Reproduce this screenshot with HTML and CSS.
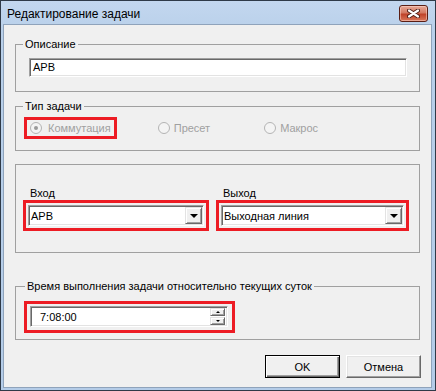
FILE: index.html
```html
<!DOCTYPE html>
<html lang="ru">
<head>
    <meta charset="UTF-8">
    <title>Редактирование задачи</title>
    <link rel="stylesheet" href="styles.css">
</head>
<body>
    <div class="window">
        <div class="titlebar">
            <span class="title">Редактирование задачи</span>
            <span class="close">
                <svg width="13" height="9" viewBox="0 0 13 9">
                    <path d="M2 1.5 L11 7.5 M11 1.5 L2 7.5" stroke="#4a1a12" stroke-width="4" stroke-linecap="round"/>
                    <path d="M2 1.5 L11 7.5 M11 1.5 L2 7.5" stroke="#fff" stroke-width="2.2" stroke-linecap="round"/>
                </svg>
            </span>
        </div>

        <div class="client">
            <!-- Описание -->
            <fieldset class="group">
                <legend>Описание</legend>
                <div class="body desc">
                    <div class="field">АРВ</div>
                </div>
            </fieldset>

            <!-- Тип задачи -->
            <fieldset class="group">
                <legend>Тип задачи</legend>
                <div class="body kind">
                    <div class="mark radio-mark">
                        <span class="radio checked"><i></i>Коммутация</span>
                    </div>
                    <span class="radio preset"><i></i>Пресет</span>
                    <span class="radio macro"><i></i>Макрос</span>
                </div>
            </fieldset>

            <!-- Вход / Выход -->
            <fieldset class="group">
                <div class="body io">
                    <div class="col">
                        <div class="label">Вход</div>
                        <div class="mark">
                            <div class="combo"><span>АРВ</span><b class="arrow"></b></div>
                        </div>
                    </div>
                    <div class="col">
                        <div class="label">Выход</div>
                        <div class="mark">
                            <div class="combo"><span>Выходная линия</span><b class="arrow"></b></div>
                        </div>
                    </div>
                </div>
            </fieldset>

            <!-- Время -->
            <fieldset class="group time-group">
                <legend>Время выполнения задачи относительно текущих суток</legend>
                <div class="body time">
                    <div class="mark time-mark">
                        <div class="spin">
                            <span>7:08:00</span>
                            <div class="spin-btns">
                                <b class="up"></b>
                                <b class="down"></b>
                            </div>
                        </div>
                    </div>
                </div>
            </fieldset>

            <div class="buttons">
                <button class="btn default">OK</button>
                <button class="btn">Отмена</button>
            </div>
        </div>
    </div>
</body>
</html>
```

FILE: styles.css
```css
* {
    box-sizing: border-box;
}
body {
    margin: 0;
    font-family: "Liberation Sans", Arial, sans-serif;
    font-size: 11px;
    color: #000;
    background: #fff;
}
.window {
    width: 436px;
    height: 391px;
    border: 1px solid #2f3a48;
    background: linear-gradient(#c3d7ef, #b9d0ea 30px, #b4cce8);
    padding: 0 3px 2px 2px;
    display: flex;
    flex-direction: column;
}
.titlebar {
    height: 23px;
    display: flex;
    align-items: flex-start;
    justify-content: space-between;
}
.title {
    font-size: 12px;
    line-height: 14px;
    padding: 6px 0 0 4px;
    color: #000;
}
.close {
    width: 29px;
    height: 17px;
    margin: 4px 4px 0 0;
    border: 1px solid #5a1e14;
    border-radius: 3px;
    background: linear-gradient(#e8a896, #d47a63 45%, #c0432a 55%, #d9775a);
    box-shadow: inset 0 0 0 1px rgba(255, 220, 210, 0.5);
    display: flex;
    align-items: center;
    justify-content: center;
}
.client {
    flex: 1;
    background: #f0f0f0;
    border: 1px solid #8fa3bb;
    padding: 13px 11px 0 11px;
}
.group {
    margin: 0;
    padding: 0;
    min-width: 0;
    border: 1px solid #a0a0a0;
}
.group + .group {
    margin-top: 8px;
}
.group legend {
    padding: 0 2px;
    margin-left: 7px;
    line-height: 13px;
}
.desc {
    padding: 7px 12px 14px 13px;
}
.field, .combo, .spin {
    background: #fff;
    border: 1px solid;
    border-color: #a0a0a0 #fff #fff #a0a0a0;
    box-shadow: inset 1px 1px 0 #696969, inset -1px -1px 0 #e3e3e3;
}
.field {
    height: 19px;
    line-height: 17px;
    padding-left: 3px;
}
.mark {
    border: 3px solid #ed1c24;
    padding: 2px;
}

/* Тип задачи */
.kind {
    display: flex;
    align-items: center;
    padding: 4px 0 11px 8px;
}
.radio-mark {
    height: 22px;
    padding: 0 3px;
    display: flex;
    align-items: center;
}
.radio {
    display: flex;
    align-items: center;
    gap: 6px;
    color: #a0a0a0;
    line-height: 13px;
}
.radio i {
    width: 12px;
    height: 12px;
    border: 1px solid #b4b4b4;
    border-radius: 50%;
    background: #f4f4f4;
    position: relative;
}
.radio.checked i::after {
    content: "";
    position: absolute;
    left: 3px;
    top: 3px;
    width: 4px;
    height: 4px;
    border-radius: 50%;
    background: #9a9a9a;
}
.preset {
    margin-left: 41px;
    gap: 4px;
}
.macro {
    margin-left: 54px;
    gap: 4px;
}

/* Вход / Выход */
.group + .group.time-group {
    margin-top: 27px;
}
.group:nth-child(3) {
    margin-top: 13px;
}
.io {
    display: grid;
    grid-template-columns: 186px 193px;
    column-gap: 7px;
    padding: 22px 9px 21px 7px;
}
.label {
    line-height: 13px;
    padding-left: 7px;
}
.combo {
    height: 21px;
    display: flex;
    align-items: center;
    justify-content: space-between;
    padding: 0 1px 0 2px;
}
.arrow, .spin-btns b {
    background: #f0f0f0;
    border: 1px solid;
    border-color: #e3e3e3 #696969 #696969 #e3e3e3;
    box-shadow: inset 1px 1px 0 #fff, inset -1px -1px 0 #a0a0a0;
    display: flex;
    align-items: center;
    justify-content: center;
}
.arrow {
    width: 17px;
    height: 17px;
}
.arrow::after {
    content: "";
    border-left: 4px solid transparent;
    border-right: 4px solid transparent;
    border-top: 4px solid #000;
    margin-top: 1px;
}

/* Время */
.time {
    padding: 8px 0 6px 8px;
}
.time-group legend {
    margin-left: 9px;
}
.time-mark {
    width: 211px;
    padding: 2px 4px 3px 3px;
}
.spin {
    height: 21px;
    display: flex;
    align-items: center;
    justify-content: space-between;
    padding: 0 2px 0 9px;
}
.spin-btns {
    display: flex;
    flex-direction: column;
    gap: 1px;
}
.spin-btns b {
    width: 15px;
    height: 8px;
}
.spin-btns .up::after {
    content: "";
    border-left: 2px solid transparent;
    border-right: 2px solid transparent;
    border-bottom: 2px solid #000;
}
.spin-btns .down::after {
    content: "";
    border-left: 2px solid transparent;
    border-right: 2px solid transparent;
    border-top: 2px solid #000;
}

/* Кнопки */
.buttons {
    display: flex;
    justify-content: flex-end;
    gap: 6px;
    margin: 15px -1px 0 0;
}
.btn {
    width: 75px;
    height: 23px;
    font-family: inherit;
    font-size: 11px;
    background: #f0f0f0;
    border: 1px solid;
    border-color: #fff #696969 #696969 #fff;
    box-shadow: inset -1px -1px 0 #a0a0a0, inset 1px 1px 0 #e3e3e3;
    padding: 0;
}
.btn.default {
    border: 1px solid #000;
    box-shadow: inset 1px 1px 0 #fff, inset -1px -1px 0 #696969, inset -2px -2px 0 #a0a0a0;
}
```
